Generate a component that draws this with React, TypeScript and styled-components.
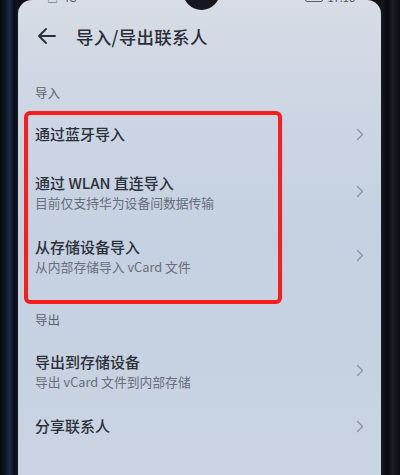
import React from "react";
import styled, { createGlobalStyle } from "styled-components";

const GlobalStyle = createGlobalStyle`
  html, body {
    margin: 0;
    padding: 0;
    width: 400px;
    height: 475px;
    overflow: hidden;
    background: #0c0f15;
  }
  * { box-sizing: border-box; }
`;

const FONT = `"Noto Sans CJK SC", "Noto Sans", Roboto, sans-serif`;

const Device = styled.div`
  display: flex;
  width: 400px;
  height: 475px;
`;

const Bezel = styled.div<{ $w: number; $side: "left" | "right" }>`
  flex: 0 0 ${(p) => p.$w}px;
  background: ${(p) =>
    p.$side === "left"
      ? "linear-gradient(90deg, #07090d 0%, #111726 30%, #1d2a4a 55%, #0b0e15 80%, #121722 100%)"
      : "linear-gradient(90deg, #151a24 0%, #07090d 35%, #1a1f2a 60%, #0a0c11 100%)"};
`;

const Screen = styled.div`
  position: relative;
  flex: 1;
  display: flex;
  flex-direction: column;
  overflow: hidden;
  border-radius: 14px 14px 0 0;
  background: linear-gradient(
    180deg,
    #d7dce5 0%,
    #ccd5e3 25%,
    #c5d1e1 50%,
    #c7d2e1 75%,
    #cad4e2 100%
  );
  font-family: ${FONT};
`;

const Notch = styled.div`
  position: absolute;
  top: -27px;
  left: 165px;
  width: 37px;
  height: 37px;
  border-radius: 50%;
  background: #15171c;
`;

const StatusBar = styled.div`
  height: 14px;
  display: flex;
  justify-content: space-between;
  align-items: flex-start;
  padding: 0 26px 0 29px;
  overflow: hidden;
`;

const StatusGroup = styled.div`
  display: flex;
  align-items: center;
  gap: 5px;
  margin-top: -9px;
  font-size: 11px;
  line-height: 12px;
  color: #4b505a;
`;

const Battery = styled.div`
  width: 18px;
  height: 9px;
  border: 1.5px solid #5a5f68;
  border-radius: 2px;
`;

const Header = styled.div`
  height: 44px;
  display: flex;
  align-items: center;
  padding-left: 19px;
`;

const BackButton = styled.div`
  width: 20px;
  height: 20px;
  display: flex;
  align-items: center;
  margin-right: 19px;
`;

const Title = styled.div`
  font-size: 17.5px;
  font-weight: 500;
  color: #2a2e37;
  letter-spacing: 0.3px;
`;

const SectionLabel = styled.div<{ $top: number; $bottom: number }>`
  padding: ${(p) => p.$top}px 0 ${(p) => p.$bottom}px 17px;
  font-size: 12.5px;
  line-height: 18px;
  color: #5c626d;
`;

const Row = styled.div<{ $h: number }>`
  height: ${(p) => p.$h}px;
  display: flex;
  align-items: center;
  padding: 0 16px 0 17px;
`;

const RowText = styled.div<{ $shift: number }>`
  flex: 1;
  display: flex;
  flex-direction: column;
  padding-top: ${(p) => p.$shift}px;
`;

const RowTitle = styled.div`
  font-size: 15px;
  line-height: 20px;
  font-weight: 500;
  color: #2b2f38;
`;

const RowSub = styled.div`
  margin-top: 1px;
  font-size: 12.8px;
  line-height: 18px;
  color: #676d79;
`;

const Chevron = styled.div`
  width: 10px;
  height: 14px;
  display: flex;
  align-items: center;
  justify-content: center;
`;

const Highlight = styled.div`
  position: absolute;
  left: 6px;
  top: 111px;
  width: 258px;
  height: 193px;
  border: 4px solid #ff1c1c;
  border-radius: 6px;
  pointer-events: none;
`;

const ArrowLeft = () => (
  <svg width="20" height="20" viewBox="0 0 20 20" fill="none">
    <path
      d="M18 10H2M9 3L2 10L9 17"
      stroke="#2a2e37"
      strokeWidth="1.9"
      strokeLinecap="round"
      strokeLinejoin="round"
    />
  </svg>
);

const ChevronIcon = () => (
  <svg width="8" height="13" viewBox="0 0 8 13" fill="none">
    <path
      d="M1.5 1.5L6.5 6.5L1.5 11.5"
      stroke="#8d939d"
      strokeWidth="1.4"
      strokeLinecap="round"
      strokeLinejoin="round"
    />
  </svg>
);

type Item = { title: string; sub?: string; h: number };

const importItems: Item[] = [
  { title: "通过蓝牙导入", h: 50 },
  { title: "通过 WLAN 直连导入", sub: "目前仅支持华为设备间数据传输", h: 64 },
  { title: "从存储设备导入", sub: "从内部存储导入 vCard 文件", h: 64 },
];

const exportItems: Item[] = [
  { title: "导出到存储设备", sub: "导出 vCard 文件到内部存储", h: 64 },
  { title: "分享联系人", h: 48 },
];

const ListRow = ({ item }: { item: Item }) => (
  <Row $h={item.h}>
    <RowText $shift={item.sub ? 2 : 0}>
      <RowTitle>{item.title}</RowTitle>
      {item.sub && <RowSub>{item.sub}</RowSub>}
    </RowText>
    <Chevron>
      <ChevronIcon />
    </Chevron>
  </Row>
);

export default function App() {
  return (
    <>
      <GlobalStyle />
      <Device>
        <Bezel $w={18} $side="left" />
        <Screen>
          <StatusBar>
            <StatusGroup>
              <span>▣</span>
              <span>4G</span>
            </StatusGroup>
            <StatusGroup>
              <Battery />
              <span>17:16</span>
            </StatusGroup>
          </StatusBar>
          <Header>
            <BackButton>
              <ArrowLeft />
            </BackButton>
            <Title>导入/导出联系人</Title>
          </Header>
          <SectionLabel $top={26} $bottom={7}>导入</SectionLabel>
          {importItems.map((it) => (
            <ListRow key={it.title} item={it} />
          ))}
          <SectionLabel $top={24} $bottom={9}>导出</SectionLabel>
          {exportItems.map((it) => (
            <ListRow key={it.title} item={it} />
          ))}
          <Notch />
          <Highlight />
        </Screen>
        <Bezel $w={19} $side="right" />
      </Device>
    </>
  );
}
